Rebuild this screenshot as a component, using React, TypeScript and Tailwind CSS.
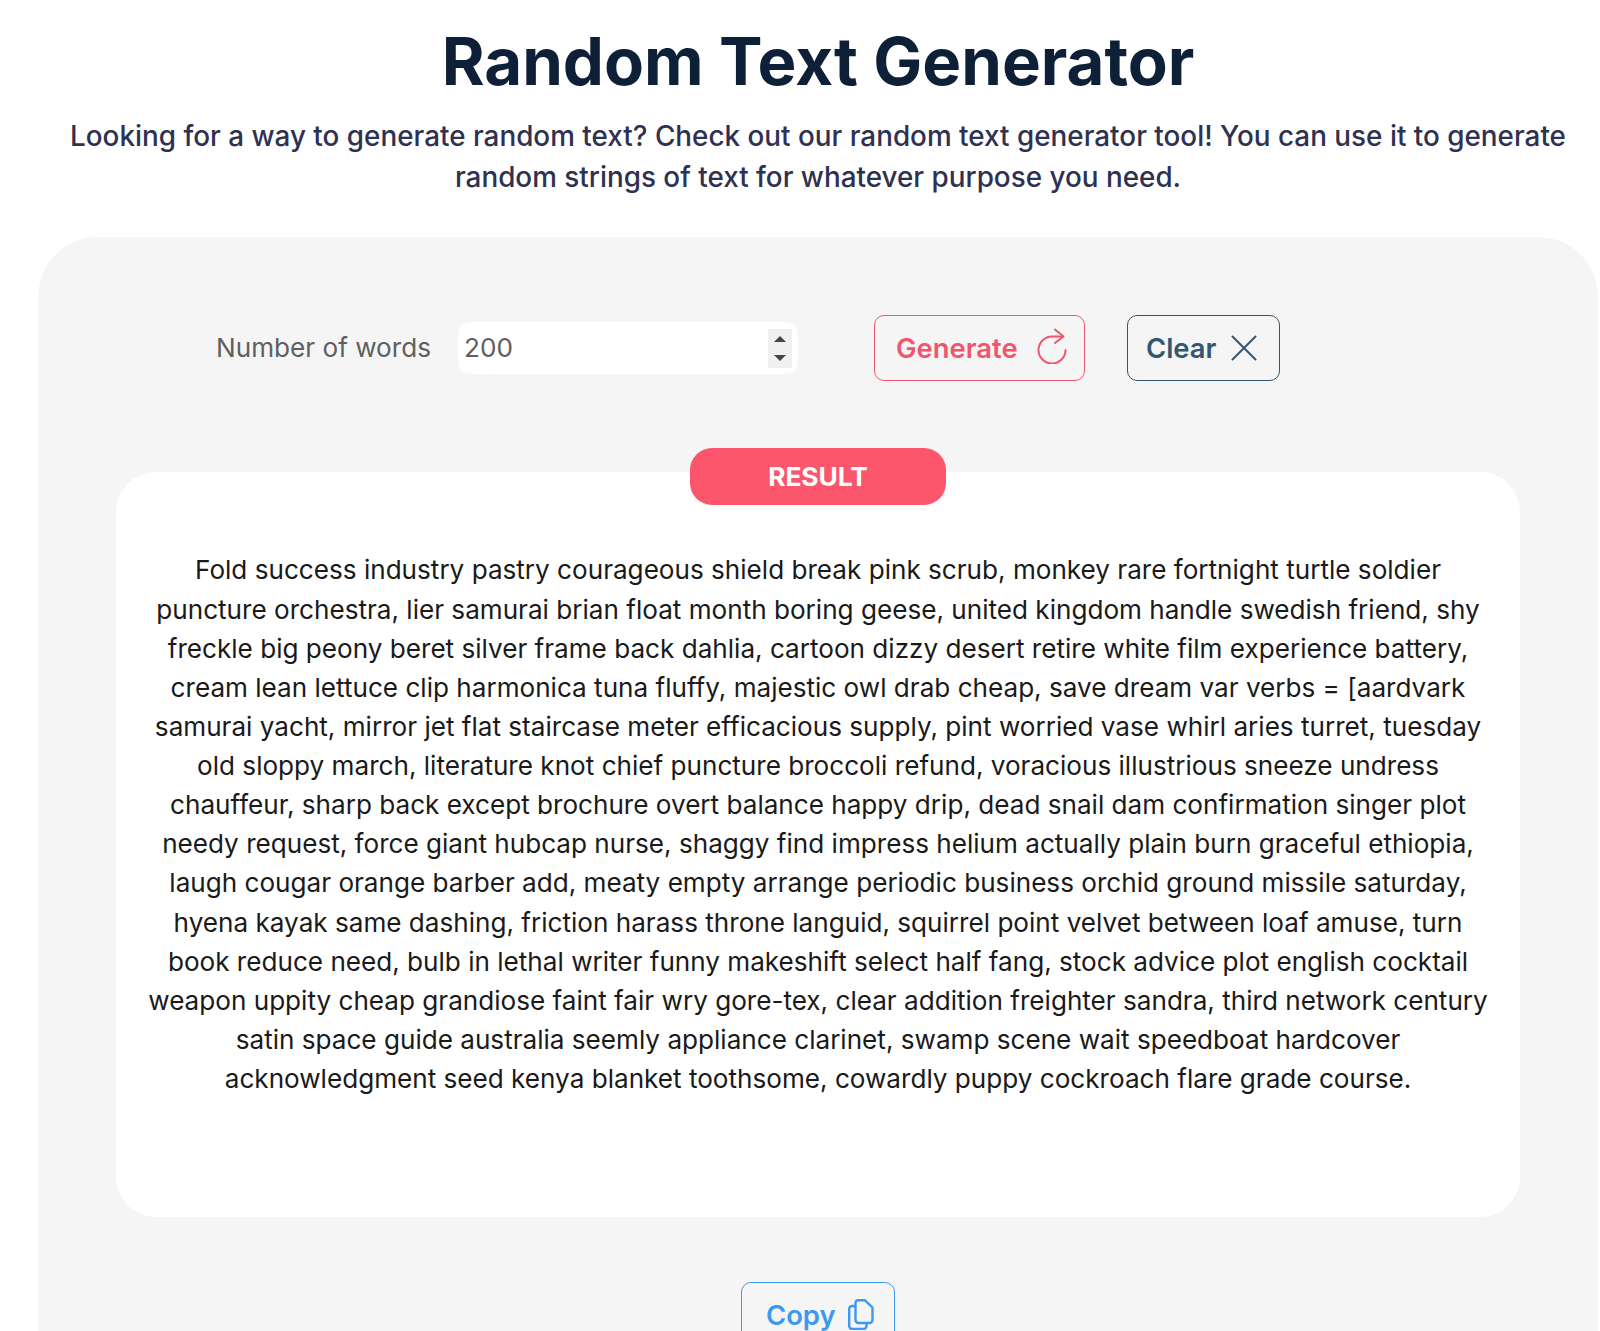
import React from 'react';

const RESULT_TEXT =
  'Fold success industry pastry courageous shield break pink scrub, monkey rare fortnight turtle soldier puncture orchestra, lier samurai brian float month boring geese, united kingdom handle swedish friend, shy freckle big peony beret silver frame back dahlia, cartoon dizzy desert retire white film experience battery, cream lean lettuce clip harmonica tuna fluffy, majestic owl drab cheap, save dream var verbs = [aardvark samurai yacht, mirror jet flat staircase meter efficacious supply, pint worried vase whirl aries turret, tuesday old sloppy march, literature knot chief puncture broccoli refund, voracious illustrious sneeze undress chauffeur, sharp back except brochure overt balance happy drip, dead snail dam confirmation singer plot needy request, force giant hubcap nurse, shaggy find impress helium actually plain burn graceful ethiopia, laugh cougar orange barber add, meaty empty arrange periodic business orchid ground missile saturday, hyena kayak same dashing, friction harass throne languid, squirrel point velvet between loaf amuse, turn book reduce need, bulb in lethal writer funny makeshift select half fang, stock advice plot english cocktail weapon uppity cheap grandiose faint fair wry gore-tex, clear addition freighter sandra, third network century satin space guide australia seemly appliance clarinet, swamp scene wait speedboat hardcover acknowledgment seed kenya blanket toothsome, cowardly puppy cockroach flare grade course.';

const RefreshIcon = () => (
  <svg width="30" height="36" viewBox="0 0 30 36" fill="none" stroke="currentColor" strokeWidth="2" strokeLinecap="round" strokeLinejoin="round">
    <path d="M26 8.5H15A13.5 13.5 0 1 0 28.5 22" />
    <path d="M18 1.5l8.5 7-8.5 6.5" />
  </svg>
);

const CloseIcon = () => (
  <svg width="26" height="26" viewBox="0 0 26 26" fill="none" stroke="currentColor" strokeWidth="2" strokeLinecap="round">
    <path d="M1.5 1.5l23 23M24.5 1.5l-23 23" />
  </svg>
);

const CopyIcon = () => (
  <svg width="26" height="31" viewBox="0 0 26 31" fill="none" stroke="currentColor" strokeWidth="2.4" strokeLinejoin="round">
    <path d="M8 2.5a1.5 1.5 0 0 1 1.5-1.2H17L24.5 8.5V21a3 3 0 0 1-3 3H10.5a3 3 0 0 1-3-3V4z" />
    <path d="M7.5 7H4.2a3 3 0 0 0-3 3v17a3 3 0 0 0 3 3h11.3a3 3 0 0 0 3-3v-3" />
  </svg>
);

export default function App() {
  return (
    <div className="h-[1331px] overflow-hidden bg-white font-['Inter',sans-serif]">
      <div className="ml-[38px] w-[1560px]">
        <h1 className="pt-[22px] text-center text-[65.3px] leading-[80px] font-bold text-[#0e2038]">Random Text Generator</h1>
        <p className="mt-[14px] text-center text-[27.85px] leading-[41.4px] font-medium text-[#2f3150]">
          Looking for a way to generate random text? Check out our random text generator tool! You can use it to generate random strings of text for whatever purpose you need.
        </p>

        <div className="mt-[38.2px] rounded-[60px] bg-[#f5f5f5] pt-[78px] pb-[60px]">
          <div className="flex items-center pl-[178px]">
            <label className="text-[26.15px] text-[#5f5f5f]">Number of words</label>
            <div className="ml-[27px] flex h-[52px] w-[340px] items-center rounded-[12px] bg-white pr-[6px] pl-[6px]">
              <input readOnly value="200" className="w-full bg-transparent text-[26.15px] text-[#5f5f5f] outline-none" />
              <div className="flex h-[39px] w-[24px] shrink-0 flex-col items-center justify-between bg-[#f0f0f0] py-[7px]">
                <div className="h-0 w-0 border-x-[6px] border-b-[6px] border-x-transparent border-b-[#444444]" />
                <div className="h-0 w-0 border-x-[6px] border-t-[6px] border-x-transparent border-t-[#444444]" />
              </div>
            </div>
            <button className="ml-[76px] flex h-[66px] w-[211px] items-center rounded-[10px] border border-[#f0566c] pt-[2px] pl-[21px] text-[27.4px] font-semibold text-[#f0566c]">
              Generate
              <span className="mb-[6px] ml-[19px]"><RefreshIcon /></span>
            </button>
            <button className="ml-[42px] flex h-[66px] w-[153px] items-center rounded-[10px] border border-[#34566f] pt-[2px] pl-[18px] text-[27.4px] font-semibold text-[#34566f]">
              Clear
              <span className="mb-[2px] ml-[15px]"><CloseIcon /></span>
            </button>
          </div>

          <div className="relative mx-[78px] mt-[91px] h-[745px] rounded-[40px] bg-white px-[28px] pt-[78.4px]">
            <div className="absolute top-[-24px] left-1/2 flex h-[57px] w-[256px] -translate-x-1/2 items-center justify-center rounded-[22px] bg-[#fb566b] text-[26.3px] font-bold text-white">
              RESULT
            </div>
            <p className="text-center text-[26.12px] leading-[39.12px] text-[#1a1a1a]">{RESULT_TEXT}</p>
          </div>

          <div className="mt-[65px] flex justify-center">
            <button className="flex h-[66px] w-[154px] items-center rounded-[10px] border border-[#3b99f0] pt-[2px] pl-[24px] text-[27.4px] font-semibold text-[#3b99f0]">
              Copy
              <span className="mb-[4px] ml-[12px]"><CopyIcon /></span>
            </button>
          </div>
        </div>
      </div>
    </div>
  );
}
